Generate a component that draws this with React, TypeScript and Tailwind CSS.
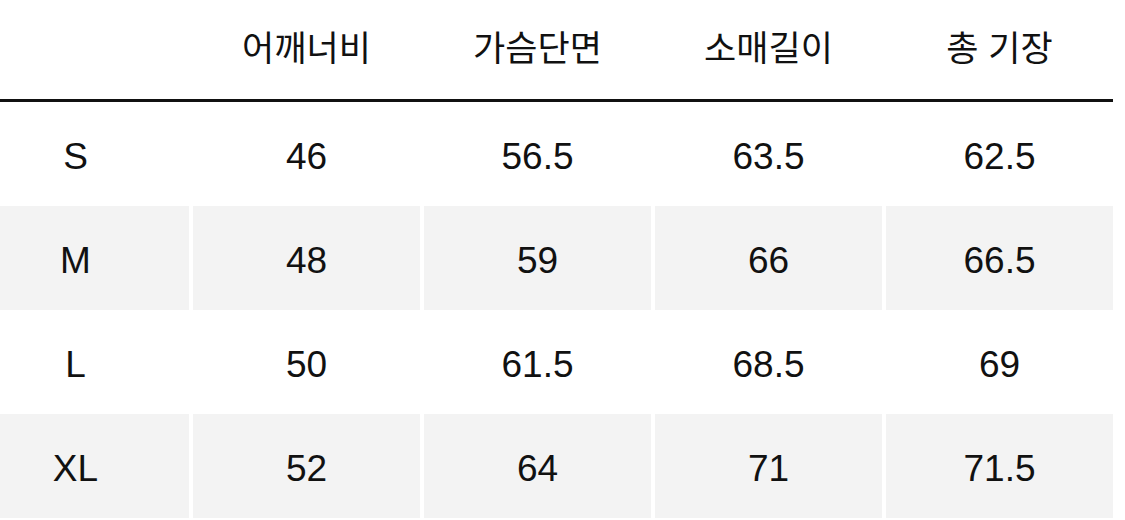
const headers = ["어깨너비", "가슴단면", "소매길이", "총 기장"];

const rows = [
  { size: "S", values: ["46", "56.5", "63.5", "62.5"] },
  { size: "M", values: ["48", "59", "66", "66.5"] },
  { size: "L", values: ["50", "61.5", "68.5", "69"] },
  { size: "XL", values: ["52", "64", "71", "71.5"] },
];

const cols = "grid grid-cols-[189px_227px_227px_227px_227px] gap-x-[4px]";

export default function App() {
  return (
    <div
      className="w-[1125px] h-[520px] bg-white text-[#111] overflow-hidden"
      style={{ fontFamily: '"Liberation Sans", "Noto Sans CJK KR", sans-serif' }}
    >
      <div className="w-[1113px]">
        {/* header */}
        <div className={`${cols} h-[102px] items-center border-b-[3px] border-[#111]`}>
          <div />
          {headers.map((h) => (
            <div key={h} className="text-center text-[35px] leading-none pb-[2px]">
              {h}
            </div>
          ))}
        </div>

        {rows.map((row, i) => (
          <div key={row.size} className={`${cols} h-[104px]`}>
            {[row.size, ...row.values].map((v, j) => (
              <div
                key={j}
                className={`flex items-center justify-center text-[37px] leading-none pt-[5px] ${
                  i % 2 === 1 ? "bg-[#f3f3f3]" : "bg-white"
                } ${j === 0 ? "pr-[38px]" : ""}`}
              >
                {v}
              </div>
            ))}
          </div>
        ))}
      </div>
    </div>
  );
}
